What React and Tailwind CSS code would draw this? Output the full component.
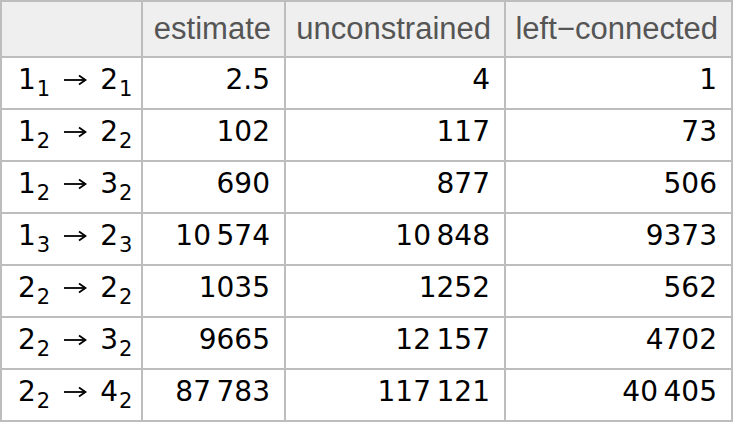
import React from "react";

const rows = [
    { from: ["1", "1"], to: ["2", "1"], estimate: "2.5", unconstrained: "4", left: "1" },
    { from: ["1", "2"], to: ["2", "2"], estimate: "102", unconstrained: "117", left: "73" },
    { from: ["1", "2"], to: ["3", "2"], estimate: "690", unconstrained: "877", left: "506" },
    { from: ["1", "3"], to: ["2", "3"], estimate: "10\u2009574", unconstrained: "10\u2009848", left: "9373" },
    { from: ["2", "2"], to: ["2", "2"], estimate: "1035", unconstrained: "1252", left: "562" },
    { from: ["2", "2"], to: ["3", "2"], estimate: "9665", unconstrained: "12\u2009157", left: "4702" },
    { from: ["2", "2"], to: ["4", "2"], estimate: "87\u2009783", unconstrained: "117\u2009121", left: "40\u2009405" },
];

// a level like 1₂ : big digit with a lowered subscript
const Node = ({ n }) => (
    <span className="inline-flex items-baseline">
        {n[0]}
        <span className="text-[21px] relative top-[7px] ml-[1px]">{n[1]}</span>
    </span>
);

const Arrow = () => (
    <svg width="24" height="14" viewBox="0 0 24 14" className="mx-[13px] mb-[1px]" aria-label="→">
        <path d="M1 7H22" stroke="black" strokeWidth="1.8" fill="none" />
        <path d="M16 2.5L22.5 7L16 11.5" stroke="black" strokeWidth="1.8" fill="none" strokeLinejoin="miter" />
    </svg>
);

const App = () => {
    return (
        <div className="w-[734px] h-[424px] bg-white">
            <div className="grid grid-cols-[139px_141px_218px_225px] grid-rows-[54px_repeat(7,50px)] gap-[2px] p-[2px] bg-[#bdbdbd] w-[733px] font-['DejaVu_Sans',sans-serif] text-[28px] text-black">
                {/* header */}
                <div className="bg-[#efefef]" />
                {["estimate", "unconstrained", "left\u2212connected"].map((h) => (
                    <div
                        key={h}
                        className="bg-[#efefef] flex items-center justify-end pr-[13px] font-['Liberation_Sans',Arial,sans-serif] text-[31px] text-[#555555]"
                    >
                        {h}
                    </div>
                ))}

                {rows.map((r, i) => (
                    <React.Fragment key={i}>
                        <div className="bg-white flex items-center pl-[16px] pb-[6px]">
                            <Node n={r.from} />
                            <Arrow />
                            <Node n={r.to} />
                        </div>
                        <div className="bg-white flex items-center justify-end pr-[14px] pb-[6px]">{r.estimate}</div>
                        <div className="bg-white flex items-center justify-end pr-[14px] pb-[6px]">{r.unconstrained}</div>
                        <div className="bg-white flex items-center justify-end pr-[14px] pb-[6px]">{r.left}</div>
                    </React.Fragment>
                ))}
            </div>
        </div>
    );
};

export default App;
